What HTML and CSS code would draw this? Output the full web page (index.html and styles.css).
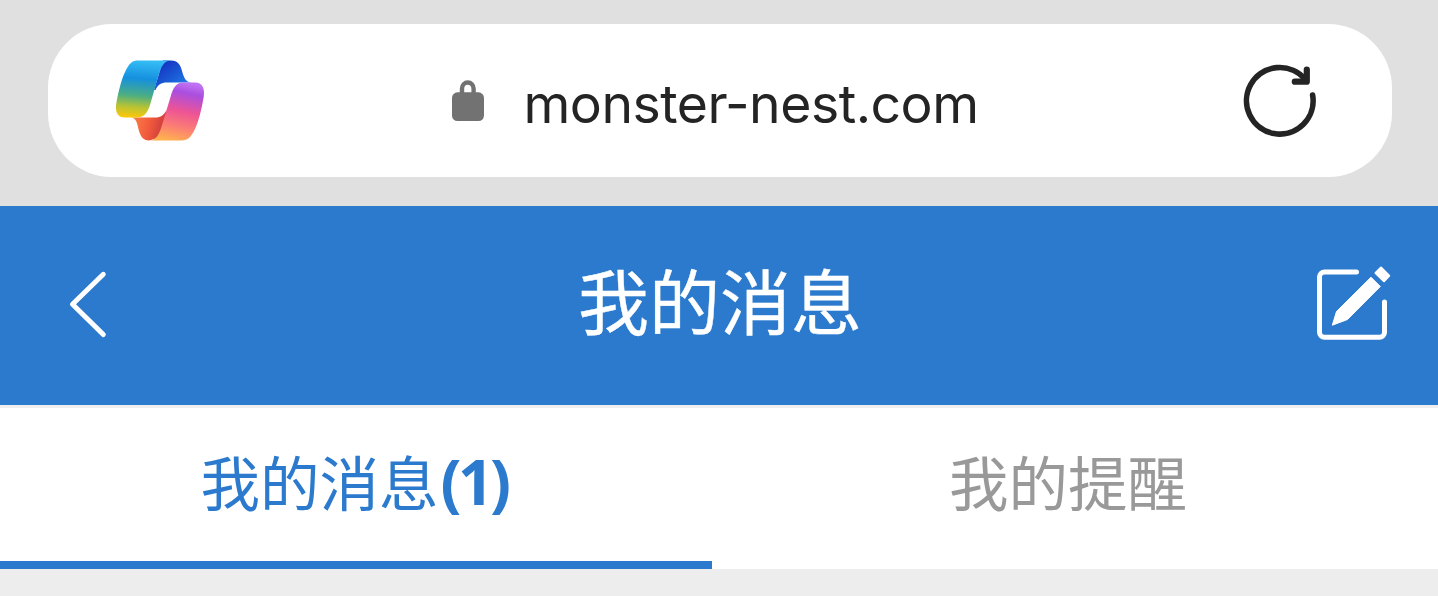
FILE: index.html
```html
<!DOCTYPE html>
<html lang="zh-CN">
<head>
    <meta charset="UTF-8">
    <title>我的消息</title>
    <link rel="stylesheet" href="styles.css">
</head>
<body>
    <!-- Address bar -->
    <div class="browser-bar">
        <div class="address">
            <svg class="copilot" viewBox="115 59 91 83">
                <defs>
                    <linearGradient id="blue" x1="0.5" y1="0" x2="0.42" y2="1">
                        <stop offset="0" stop-color="#35bdf5"/>
                        <stop offset="0.32" stop-color="#1590df"/>
                        <stop offset="0.62" stop-color="#4bae83"/>
                        <stop offset="0.82" stop-color="#b6c335"/>
                        <stop offset="1" stop-color="#f9c80b"/>
                    </linearGradient>
                    <linearGradient id="navy" x1="0" y1="0" x2="1" y2="1">
                        <stop offset="0.2" stop-color="#1539c4"/>
                        <stop offset="1" stop-color="#218bee"/>
                    </linearGradient>
                    <linearGradient id="pink" x1="0.6" y1="0" x2="0.4" y2="1">
                        <stop offset="0" stop-color="#c070f2"/>
                        <stop offset="0.16" stop-color="#aa4ee0"/>
                        <stop offset="0.48" stop-color="#ee5494"/>
                        <stop offset="0.75" stop-color="#fb7d75"/>
                        <stop offset="1" stop-color="#ffb04f"/>
                    </linearGradient>
                    <linearGradient id="red" x1="0" y1="0.3" x2="1" y2="0.5">
                        <stop offset="0" stop-color="#fb8148"/>
                        <stop offset="0.5" stop-color="#f35d3d"/>
                        <stop offset="1" stop-color="#c8383b"/>
                    </linearGradient>
                </defs>
                <path fill="url(#navy)" d="M163 60.5H171C178 60.5 180.500 65 182 71C184 78 186 82.500 192 82.500H167C161 82.500 158 84.500 155.500 90L154 90Z"/>
                <path fill="url(#red)" d="M131 117.500H155C161 117.500 163.500 115.500 166.500 110L165 136L149 140.500C143 140.500 140.500 136 139 131C137 123 136.500 118 131 117.500Z"/>
                <path fill="url(#blue)" d="M137 60.500H171C163.500 60.500 160.500 68 158 77L150 105C147.500 113 144 117.500 136 117.500H125C118 117.500 114.500 113 116.500 102C118.500 92 121 80 125.500 71C129 64 132 60.500 137 60.500Z"/>
                <path fill="url(#pink)" d="M183 82.500H195C202 82.500 205.500 88 203.500 98C201.500 109 199 121 194.500 130C191 137 187.500 140.500 182 140.500H149C156 140.500 159.500 134 162 125L170.500 97C173 88 176 82.500 183 82.500Z"/>
            </svg>
            <div class="site">
                <svg class="lock" viewBox="451 79 34 43">
                    <path d="M462 95V88.500a5.800 6 0 0 1 11.600 0V95" fill="none" stroke="#727272" stroke-width="4.400"/>
                    <rect x="452" y="92.300" width="32" height="28.700" rx="5.500" fill="#727272"/>
                </svg>
                <span class="url">monster-nest.com</span>
            </div>
            <svg class="reload" viewBox="1242 63 76 76">
                <path d="M1312.600 95A33.300 33.300 0 1 1 1305 79"/>
                <path class="arrow" d="M1306.800 69.500V81.700H1294.800"/>
            </svg>
        </div>
    </div>

    <!-- Page header -->
    <div class="header">
        <svg class="back" viewBox="68 269 40 70">
            <path d="M103.300 274.300L72.500 304.200L103.300 334.500"/>
        </svg>
        <div class="title">我的消息</div>
        <svg class="edit" viewBox="1315 265 77 77">
            <path fill="none" stroke="#fff" stroke-width="5" stroke-linecap="round" d="M1356.500 272H1324.500a5 5 0 0 0-5 5V332.200a5 5 0 0 0 5 5H1379.500a5 5 0 0 0 5-5V302"/>
            <path fill="#fff" stroke="#fff" stroke-linejoin="round" d="M1371 277.200L1380.300 286.500L1347.500 319.500L1332.300 325.200L1336.500 311.500Z"/>
            <path fill="#fff" stroke="#fff" stroke-width="2" stroke-linejoin="round" d="M1381 267.500L1389.200 275.700L1384 281.300L1375.500 273Z"/>
        </svg>
    </div>

    <!-- Tabs -->
    <div class="tabs">
        <div class="tab active"><span class="label">我的消息</span><span class="count">(1)</span></div>
        <div class="tab"><span class="label">我的提醒</span></div>
    </div>
</body>
</html>
```

FILE: styles.css
```css
* {
    box-sizing: border-box;
}
body {
    margin: 0;
    background: #ededed;
    font-family: "Noto Sans CJK SC", sans-serif;
    overflow: hidden;
}
svg {
    display: block;
    flex: none;
}
.browser-bar {
    height: 206px;
    padding: 24px 46px 29px 48px;
    background: #e0e0e0;
}
.address {
    display: flex;
    align-items: center;
    justify-content: space-between;
    height: 153px;
    padding: 0 74px 0 67px;
    background: #fff;
    border-radius: 64px;
}
.copilot {
    width: 91px;
    height: 83px;
}
.site {
    display: flex;
    align-items: center;
    margin-right: 18px;
}
.lock {
    width: 34px;
    height: 43px;
}
.url {
    width: 456px;
    margin-left: 39px;
    padding-top: 7px;
    font-family: Inter, sans-serif;
    font-size: 53.5px;
    letter-spacing: -0.5px;
    line-height: 64px;
    color: #242424;
    white-space: nowrap;
}
.reload {
    width: 76px;
    height: 76px;
    fill: none;
    stroke: #242424;
    stroke-width: 5.6px;
    stroke-linecap: round;
    stroke-linejoin: round;
}
.arrow {
    stroke-width: 6.2px;
}
.header {
    display: flex;
    align-items: center;
    justify-content: space-between;
    height: 199px;
    padding: 0 46px 3px 68px;
    background: #2b7acd;
}
.back {
    width: 40px;
    height: 70px;
    fill: none;
    stroke: #fff;
    stroke-width: 5px;
    stroke-linecap: round;
    stroke-linejoin: round;
}
.title {
    margin-left: 17px;
    padding-bottom: 12px;
    font-size: 71px;
    line-height: 100px;
    color: #fff;
    -webkit-text-stroke: 0.4px #fff;
}
.edit {
    width: 77px;
    height: 77px;
    margin-bottom: 1px;
}
.tabs {
    display: flex;
    height: 164px;
    border-top: 3px solid #eee;
    background: #fff;
}
.tab {
    display: flex;
    justify-content: center;
    width: 712px;
    padding-top: 32px;
    font-size: 59.5px;
    line-height: 80px;
    color: #999;
}
.active {
    border-bottom: 8px solid #2b7acd;
    color: #2b7acd;
}
.count {
    margin: 0 4px 0 2px;
    padding-top: 1px;
    font-family: "Noto Sans", sans-serif;
    font-size: 62px;
    font-weight: bold;
    letter-spacing: -3.5px;
}
```
